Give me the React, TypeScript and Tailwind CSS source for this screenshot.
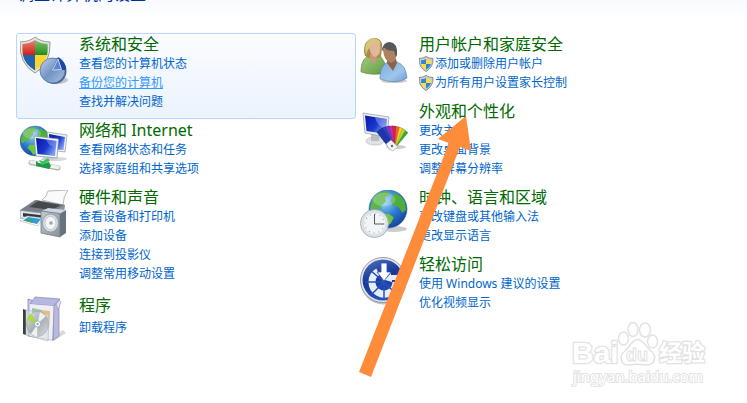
import type { ReactNode } from "react";

type Category = {
  title: string;
  icon: ReactNode;
  links: string[];
  active?: string;
  shield?: boolean;
};

function Globe({ cx, cy, r }: { cx: number; cy: number; r: number }) {
  return (
    <g transform={`translate(${cx} ${cy}) scale(${r / 20})`}>
      <circle r="20" fill="url(#globe)" stroke="#2a62a8" strokeWidth="0.6" />
      <path d="M-16 -11 L-10 -17 L-1 -19 L2 -15 L-3 -12 L-2 -8 L-8 -3 L-6 1 L-12 -1 L-16 3 L-19 0 Z" fill="#5db544" />
      <path d="M7 -17 L14 -13 L18 -7 L19 1 L15 4 L11 -2 L5 -4 L3 -9 Z" fill="#4fae3b" />
      <path d="M-7 5 L1 5 L6 9 L3 15 L-2 19 L-6 13 L-10 9 Z" fill="#6cc63e" />
      <ellipse cx="-4" cy="-10" rx="12" ry="7" fill="#fff" opacity="0.22" />
    </g>
  );
}

function SecurityIcon() {
  return (
    <svg viewBox="0 0 48 48" className="size-12" aria-hidden="true">
      <ellipse cx="37" cy="43" rx="11" ry="4" fill="#000" opacity="0.2" />
      <path d="M15 0 Q21 5 30 5 Q31 27 15 36 Q-1 27 0 5 Q9 5 15 0Z" fill="#e6e6e2" stroke="#8b8b88" strokeWidth="0.9" />
      <path d="M15 3 V18 H2.8 Q2 12 2.4 7 Q10 6.5 15 3Z" fill="url(#red)" />
      <path d="M15 3 Q20 6.5 27.6 7 Q28 12 27.2 18 H15Z" fill="url(#green)" />
      <path d="M2.8 18 H15 V33.5 Q5 27.5 2.8 18Z" fill="#1f62ae" />
      <path d="M27.2 18 H15 V33.5 Q25 27.5 27.2 18Z" fill="#fbd42e" />
      <ellipse cx="34" cy="34" rx="12.5" ry="13" fill="#4a6690" />
      <circle cx="32.5" cy="33.5" r="12.5" fill="url(#ball)" stroke="#5675a3" strokeWidth="0.8" />
      <path d="M32 33 L38 20 Q46 24 46 33 Z" fill="#1d47a5" />
      <path d="M32.5 33 L38 22 L41.5 32.5 Z" fill="#5f86cc" stroke="#c4d8f3" strokeWidth="1" />
    </svg>
  );
}

function NetworkIcon() {
  return (
    <svg viewBox="0 0 48 48" className="size-12" aria-hidden="true">
      <ellipse cx="36" cy="36" rx="11" ry="2" fill="#000" opacity="0.15" />
      <Globe cx={15} cy={18} r={15} />
      <path d="M27 9 L47 12 L45 29 L30 27Z" fill="#eef2f5" stroke="#8e99a4" strokeWidth="0.7" />
      <path d="M29 11 L45 14 L43.5 27 L30 26Z" fill="url(#screen)" />
      <path d="M24 33 h8 l3 4 h-14Z" fill="#c8ced4" />
      <path d="M14 13 L38.5 16 L37 35 L16 33Z" fill="#f4f6f8" stroke="#8e99a4" strokeWidth="0.8" />
      <path d="M16 15 L36.5 18 L35 33 L17.5 31Z" fill="url(#screen)" />
      <path d="M26 16.5 L36.5 18 L36 24 Q29 24 26 16.5Z" fill="#8098ef" opacity="0.55" />
      <path d="M11 39.5 L38 45" stroke="#a8b2ab" strokeWidth="5" strokeLinecap="round" />
      <path d="M11 39 L38 44.500" stroke="#eef2ef" strokeWidth="3.5" strokeLinecap="round" />
      <path d="M16 38 Q20 43 29 39 L31 43 L29 46 L16 43Z" fill="#1c9a44" />
      <path d="M19 37 l4 1 l5 -3 l2 3 l-8 4Z" fill="#3cc163" />
    </svg>
  );
}

function HardwareIcon() {
  return (
    <svg viewBox="0 0 48 48" className="size-12" aria-hidden="true">
      <path d="M28 1 L48 0 Q43 7 43 15 L22 10 Q27 7 28 1Z" fill="#fafafa" stroke="#a5a8ab" strokeWidth="0.8" />
      <path d="M0 20 L15 10 L45 15 L44 23 L27 32 L0 27Z" fill="#8b949d" />
      <path d="M1 20 L16 10 L45 15 L30 24Z" fill="#7b8087" />
      <path d="M9 17 L18 11 L41 15 L32 20Z" fill="#44494f" />
      <path d="M0 20.5 L30 24 V32 L0 28Z" fill="#e4e7ea" stroke="#8c949c" strokeWidth="0.7" />
      <path d="M3 23 L24 25.5 V29 L3 26.5Z" fill="#343a42" />
      <path d="M7 26 L23 28 L18 36 L0 31Z" fill="#fff" stroke="#a0a7ae" strokeWidth="0.5" />
      <path d="M8 27 L21 29 L17 34 L3 30.5Z" fill="#349ad9" />
      <path d="M3 30.5 L10 29 L13 33Z" fill="#42a54d" />
      <path d="M22 21 L28 18 L46 20 L40 24Z" fill="#d0d6dd" />
      <path d="M40 24 L46 20 V43 L40 47Z" fill="#68737e" />
      <path d="M21 21 L40 23.5 V47 L21 43Z" fill="url(#metal)" stroke="#6d7984" strokeWidth="0.8" />
      <ellipse cx="30.5" cy="33" rx="8" ry="9" fill="#d7dde2" stroke="#8a959f" strokeWidth="0.8" />
      <ellipse cx="30.5" cy="33" rx="5.5" ry="6.5" fill="#f4f6f7" stroke="#bac1c7" strokeWidth="0.8" />
      <circle cx="31" cy="33" r="1.8" fill="#9ba5ad" />
    </svg>
  );
}

function ProgramsIcon() {
  return (
    <svg viewBox="0 -1 48 48" className="size-12" aria-hidden="true">
      <path d="M28 44 L43 34 L46 37 L34 45Z" fill="#000" opacity="0.15" />
      <path d="M8 3 L14 5 L36 8 L33 44 L8 40Z" fill="#c9cae5" stroke="#8485b4" strokeWidth="0.8" />
      <path d="M15 1 L40 3 L34 10 L10 8Z" fill="#b6b8e0" stroke="#8485b4" strokeWidth="0.7" />
      <path d="M10 8 L34 10 L32 44 L10 40Z" fill="#eeeef8" />
      <path d="M34 10 L39 4 V40 L33 44Z" fill="#b8b9dc" stroke="#8485b4" strokeWidth="0.7" />
      <path d="M39 4 L41 6 L38 14 L36 8Z" fill="#dedff1" stroke="#8485b4" strokeWidth="0.5" />
      <path d="M21 14 L30 15 L29 31 L22 29Z" fill="#f0bc78" />
      <path d="M12 12 L22 14 L21 24 L12 21Z" fill="#9cc4a0" />
      <path d="M3 13 L6 14 V39 L3 38Z" fill="#39413e" />
      <path d="M6 14 L29 18 L28 45 L6 39Z" fill="#d8dfdf" fillOpacity="0.5" stroke="#aab3b1" strokeWidth="0.6" />
      <ellipse cx="17.5" cy="28" rx="11" ry="12.5" fill="url(#disc)" stroke="#999fa3" strokeWidth="0.5" />
      <path d="M17.5 28 L7 24 Q8 20 11 18Z" fill="#a4e02c" opacity="0.9" />
      <path d="M17.5 28 L20 16 L26 20Z" fill="#fff" opacity="0.8" />
      <path d="M17.5 28 L11 38 L17 41Z" fill="#fff" opacity="0.8" />
      <circle cx="17.5" cy="28" r="3" fill="#fff" stroke="#9aa3a8" strokeWidth="0.8" />
      <circle cx="17.5" cy="28" r="1.2" fill="#68bfd0" />
    </svg>
  );
}

function UsersIcon() {
  return (
    <svg viewBox="0 0 48 48" className="size-12" aria-hidden="true">
      <ellipse cx="34" cy="44" rx="13" ry="2" fill="#000" opacity="0.2" />
      <path d="M1 32 Q2 20 11 18 H18 Q26 22 26 36 Q12 39 1 35Z" fill="url(#leaf)" stroke="#57833d" strokeWidth="0.6" />
      <path d="M5 19 Q3 14 5 7 Q9 0 16 1 Q23 3 22 10 L21 20 Q13 25 5 19Z" fill="#a98d45" />
      <path d="M10 17 H17 V21 L14 28 L10 21Z" fill="#c9977a" />
      <path d="M9 9 Q12 4 20 6 Q22 18 15 20 Q10 18 9 9Z" fill="#dfb79b" />
      <path d="M6 18 Q9 6 21 6 Q18 1 12 1 Q3 5 6 18Z" fill="#d9c380" />
      <path d="M20 41 Q20 28 28 25 H37 Q46 28 47 41 Q37 48 20 42Z" fill="url(#shirt)" stroke="#587fae" strokeWidth="0.6" />
      <path d="M27 22 H36 L37 26 L33 34 L27 26Z" fill="#8c6347" />
      <path d="M23 13 Q29 6 36 12 Q38 24 31 26 Q24 24 23 13Z" fill="#ae8160" />
      <path d="M22 13 Q23 5 30 5 Q38 6 37 18 L36 20 L34 14 Q28 14 24 11 L23 14Z" fill="#56595c" />
    </svg>
  );
}

const swatches = ["#35a83a", "#b4d92e", "#f6cf2c", "#f2642b", "#dc2050", "#c62ea9", "#7e38c8", "#2a45c4", "#1c35a8"];

function AppearanceIcon() {
  return (
    <svg viewBox="0 0 48 48" className="size-12" aria-hidden="true">
      <ellipse cx="15" cy="37" rx="9" ry="4" fill="#e0e2e4" stroke="#b5babe" strokeWidth="0.7" />
      <path d="M11 29 L20 30 L19 37 H11Z" fill="#b8bdc3" />
      <path d="M3 9 L29 13 L27 33 L5 29Z" fill="#eceff2" stroke="#9ba3ac" strokeWidth="0.8" />
      <path d="M5 11.5 L27 15 L25.5 30 L6.5 27Z" fill="url(#screen)" />
      <path d="M15 13 L27 15 L26 24 Q17 23 15 13Z" fill="#9dabf4" opacity="0.5" />
      <ellipse cx="36" cy="43" rx="10" ry="2" fill="#000" opacity="0.2" />
      {swatches.map((color, i) => (
        <path
          key={color}
          d="M29.5 44 L29 22 H36 L34.5 44Z"
          fill={color}
          stroke="#00000055"
          strokeWidth="0.3"
          transform={`rotate(${36 - i * 9} 32 44)`}
        />
      ))}
      <path d="M26 40 L31 36 L38 43 L33 47 L29 45Z" fill="#f3f3f5" stroke="#999" strokeWidth="0.5" />
      <circle cx="32" cy="42" r="1.2" fill="#666" />
    </svg>
  );
}

function ClockIcon() {
  return (
    <svg viewBox="0 0 48 48" className="size-12" aria-hidden="true">
      <ellipse cx="34" cy="39" rx="13" ry="3" fill="#000" opacity="0.2" />
      <Globe cx={28} cy={19} r={19} />
      <circle cx="14.5" cy="33.5" r="14" fill="#dfe5e9" stroke="#98a2a9" strokeWidth="0.8" />
      <circle cx="14.5" cy="33.5" r="11.5" fill="#f1f5f7" stroke="#c3cbd1" strokeWidth="0.6" />
      <circle cx="14.5" cy="33.5" r="9.5" fill="none" stroke="#8b98a1" strokeWidth="1.2" strokeDasharray="0.8 4.17" />
      <path d="M14.5 24 V34 H24" fill="none" stroke="#4d5c68" strokeWidth="1" />
    </svg>
  );
}

function AccessIcon() {
  return (
    <svg viewBox="0 0 48 48" className="size-12" aria-hidden="true">
      <ellipse cx="23.5" cy="24.5" rx="23" ry="23" fill="#777" opacity="0.45" />
      <circle cx="23" cy="23" r="22.5" fill="#e8ebf0" stroke="#7d8590" strokeWidth="0.8" />
      <circle cx="23" cy="23" r="20.5" fill="url(#access)" />
      <path d="M36 25 A12 12 0 1 1 18 14.600" fill="none" stroke="#e6eefc" strokeWidth="7" />
      <path d="M24 25 L10 39 M24 25 L38 39 M24 25 H5 M24 25 V42 M24 25 L10 13" stroke="#2851b5" strokeWidth="1.5" />
      <path d="M21 6 H27 V15 H31 L24 24 L17 15 H21Z" fill="#fff" stroke="#2851b5" strokeWidth="0.8" />
      <path d="M25 23 L31 16 V18 H40 V23 H32 V25Z" fill="#e6eefc" />
    </svg>
  );
}

function ShieldIcon() {
  return (
    <svg viewBox="1 0 16 16" className="size-4 shrink-0" aria-hidden="true">
      <path d="M8 0.500 Q11 2.500 15 2.500 Q15.500 11 8 15.500 Q0.500 11 1 2.500 Q5 2.500 8 0.500Z" fill="#c9cdd1" stroke="#7c8288" strokeWidth="0.9" />
      <path d="M8 3 V8 H3.2 Q3 6 3 4.2 Q6 4.2 8 3Z M8 8 H12.8 Q12 11.5 8 13.5Z" fill="#2b86dc" />
      <path d="M8 3 V8 H12.8 Q13 6 13 4.2 Q10 4.2 8 3Z M8 8 H3.2 Q4 11.5 8 13.5Z" fill="#ffdc3c" />
    </svg>
  );
}

const leftColumn: Category[] = [
  {
    title: "系统和安全",
    icon: <SecurityIcon />,
    links: ["查看您的计算机状态", "备份您的计算机", "查找并解决问题"],
    active: "备份您的计算机",
  },
  { title: "网络和 Internet", icon: <NetworkIcon />, links: ["查看网络状态和任务", "选择家庭组和共享选项"] },
  { title: "硬件和声音", icon: <HardwareIcon />, links: ["查看设备和打印机", "添加设备", "连接到投影仪", "调整常用移动设置"] },
  { title: "程序", icon: <ProgramsIcon />, links: ["卸载程序"] },
];

const rightColumn: Category[] = [
  { title: "用户帐户和家庭安全", icon: <UsersIcon />, links: ["添加或删除用户帐户", "为所有用户设置家长控制"], shield: true },
  { title: "外观和个性化", icon: <AppearanceIcon />, links: ["更改主题", "更改桌面背景", "调整屏幕分辨率"] },
  { title: "时钟、语言和区域", icon: <ClockIcon />, links: ["更改键盘或其他输入法", "更改显示语言"] },
  { title: "轻松访问", icon: <AccessIcon />, links: ["使用 Windows 建议的设置", "优化视频显示"] },
];

function CategoryItem({ category }: { category: Category }) {
  const { title, icon, links, active, shield } = category;
  return (
    <section
      className={
        active
          ? "flex gap-[11px] rounded-[3px] border border-[#b8d6fb] bg-gradient-to-b from-[#fbfcff] to-[#ebf3fd] px-[3px] pb-[7px]"
          : "flex gap-[11px] border border-transparent px-[3px] pb-[7px]"
      }
    >
      <div className="h-10 w-12 shrink-0 pt-[3px]">{icon}</div>
      {/* single-link entries are spread over the height of the icon */}
      <div className={links.length === 1 ? "flex flex-col gap-[3px] pt-[3px]" : ""}>
        <h2 className="text-[16px] leading-[20px] text-[#006a00]">
          <a href="#">{title}</a>
        </h2>
        <ul>
          {links.map((link) => (
            <li key={link} className="flex items-center text-[12px] leading-[19px]">
              {shield && <ShieldIcon />}
              <a href="#" className={link === active ? "text-[#3399ff] underline" : "text-[#0066cc]"}>
                {link}
              </a>
            </li>
          ))}
        </ul>
      </div>
    </section>
  );
}

function Gradients() {
  return (
    <svg className="absolute size-0" aria-hidden="true">
      <defs>
        <radialGradient id="globe" cx="0.4" cy="0.3" r="0.75">
          <stop offset="0" stopColor="#9ed8f7" />
          <stop offset="0.5" stopColor="#2f7fd2" />
          <stop offset="1" stopColor="#123f94" />
        </radialGradient>
        <linearGradient id="red" x2="0" y2="1">
          <stop stopColor="#ef8278" />
          <stop offset="1" stopColor="#cc2017" />
        </linearGradient>
        <linearGradient id="green" x2="0" y2="1">
          <stop stopColor="#83c36d" />
          <stop offset="1" stopColor="#218b20" />
        </linearGradient>
        <linearGradient id="ball" x2="1" y2="1">
          <stop stopColor="#c3d4ea" />
          <stop offset="0.5" stopColor="#7394c3" />
          <stop offset="1" stopColor="#a9c3e3" />
        </linearGradient>
        <linearGradient id="screen" x2="1" y2="0.6">
          <stop stopColor="#0718a4" />
          <stop offset="0.6" stopColor="#1838cf" />
          <stop offset="1" stopColor="#7e9cf2" />
        </linearGradient>
        <linearGradient id="metal" x2="1" y2="1">
          <stop stopColor="#c3cad1" />
          <stop offset="1" stopColor="#87929d" />
        </linearGradient>
        <linearGradient id="disc" x2="1" y2="1">
          <stop stopColor="#dfe2e4" />
          <stop offset="0.5" stopColor="#a9aeb1" />
          <stop offset="1" stopColor="#d9dcdd" />
        </linearGradient>
        <linearGradient id="leaf" x2="1" y2="1">
          <stop stopColor="#a3cd80" />
          <stop offset="1" stopColor="#5f9a42" />
        </linearGradient>
        <linearGradient id="shirt" x2="1" y2="1">
          <stop stopColor="#7facd9" />
          <stop offset="0.6" stopColor="#9ec5eb" />
          <stop offset="1" stopColor="#6d9bd0" />
        </linearGradient>
        <linearGradient id="access" x2="0.4" y2="1">
          <stop stopColor="#5474bd" />
          <stop offset="0.5" stopColor="#16399a" />
          <stop offset="1" stopColor="#2552bd" />
        </linearGradient>
      </defs>
    </svg>
  );
}

function Watermark() {
  return (
    <svg viewBox="0 0 150 75" className="absolute top-[318px] left-[568px] w-[150px]" fill="#fff" stroke="#e2e2e2" strokeWidth="1.5" strokeLinejoin="round">
      <g style={{ paintOrder: "stroke" }} strokeWidth="2.5" fontWeight="700">
        <text x="4" y="45" fontSize="30" fontFamily="'Liberation Sans', sans-serif">Bai</text>
        <text x="91" y="43" fontSize="23" fontFamily="'Noto Sans CJK SC', sans-serif">经验</text>
      </g>
      <ellipse cx="55.5" cy="20.5" rx="5" ry="6.5" />
      <ellipse cx="65" cy="11.5" rx="5" ry="7" />
      <ellipse cx="77" cy="12" rx="5.5" ry="7" />
      <ellipse cx="84.5" cy="23.5" rx="5" ry="6.5" />
      <path d="M69.5 21.5 C75 21.5 77 28 82 32 C90 38 87 47 78 47 C72 47 68 45 62 47 C53 48 50 39 57 33 C62 29 64 21.5 69.5 21.5Z" />
      <text x="58" y="43" fontSize="18" fontFamily="'Liberation Sans', sans-serif" fontWeight="700" strokeWidth="1">du</text>
      <text x="5" y="64" fontSize="15" fontFamily="'Noto Sans', sans-serif" strokeWidth="2" style={{ paintOrder: "stroke" }}>jingyan.baidu.com</text>
    </svg>
  );
}

export default function App() {
  return (
    <main className="relative min-h-screen overflow-hidden bg-white font-['Noto_Sans','Noto_Sans_CJK_SC',sans-serif]">
      <Gradients />
      <header className="flex h-[33px] items-start bg-gradient-to-b from-[#f8faff] to-white to-60% px-[18px]">
        <h1 className="-mt-4 text-[16px] leading-[20px] text-[#003399]">调整计算机的设置</h1>
      </header>
      <div className="ml-4 grid max-w-[680px] grid-cols-2">
        <div>
          {leftColumn.map((category) => (
            <CategoryItem key={category.title} category={category} />
          ))}
        </div>
        <div>
          {rightColumn.map((category) => (
            <CategoryItem key={category.title} category={category} />
          ))}
        </div>
      </div>
      <svg viewBox="0 0 120 270" className="absolute top-[112px] left-[355px] w-[120px]" aria-hidden="true">
        <path d="M111 4 L116 39 L105 35 L16 265 L4 260 L94 31 L83 27Z" fill="#ff8c3a" />
      </svg>
      <Watermark />
    </main>
  );
}
